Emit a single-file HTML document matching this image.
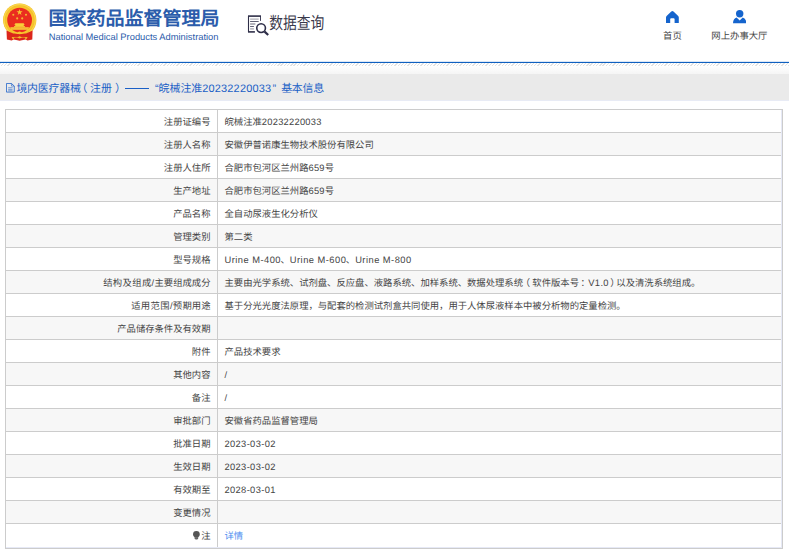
<!DOCTYPE html>
<html lang="zh-CN">
<head>
<meta charset="utf-8">
<title>国家药品监督管理局 数据查询</title>
<style>
*{box-sizing:border-box;margin:0;padding:0}
html,body{width:789px;height:555px;overflow:hidden;background:#fff}
body{font-family:"Liberation Sans",sans-serif;color:#333;position:relative;text-rendering:geometricPrecision}
.l{letter-spacing:.35px}.d{letter-spacing:.25px}.u{letter-spacing:.47px}.c{margin-left:-.5px}.s{letter-spacing:.35px}.p{position:relative}
.hdr{position:absolute;left:0;top:0;width:789px;height:61px;background:#fff}
.emblem{position:absolute;left:0;top:0}
.t1{position:absolute;left:48.6px;top:8px;font-size:19px;line-height:24px;font-weight:bold;color:#2b5cab;white-space:nowrap}
.t2{position:absolute;left:48.7px;top:31.4px;font-size:9.36px;line-height:12px;color:#2b5cab;white-space:nowrap}
.qicon{position:absolute;left:244px;top:11px}
.qtxt{position:absolute;left:269.2px;top:14.4px;font-size:13.8px;line-height:20px;color:#38384a;white-space:nowrap;transform:scaleY(1.23);transform-origin:50% 50%}
.ic{position:absolute}
.nav{position:absolute;top:29.6px;text-align:center;font-size:9.375px;line-height:12px;color:#444;white-space:nowrap}
.n1{left:652.4px;width:40px}
.n2{left:704.4px;width:70px}
.bline{position:absolute;left:0;top:61px;width:789px;height:2px;background:linear-gradient(#dbe7f6 0,#dbe7f6 1px,#0f60c0 1px,#0f60c0 2px)}
.hatch{position:absolute;left:0;top:63px;width:789px;height:3px;background:repeating-linear-gradient(135deg,#e2e2e2 0,#e2e2e2 .9px,#fff .9px,#fff 2.3px)}
.fade{position:absolute;left:0;top:66px;width:789px;height:8px;background:linear-gradient(#fff,#f5f5f5)}
.bar{position:absolute;left:0;top:74px;width:789px;height:27px;border-bottom:1px solid #e8ebf5;background:#eaeaea;color:#1a5fc6;font-size:10.9375px;line-height:13px;white-space:nowrap}
.bar svg{position:absolute;left:5.7px;top:8.9px}
.bar span{position:absolute;top:9.1px}
.bar i{font-style:normal;letter-spacing:.19px}
table{position:absolute;left:5px;top:109px;width:778px;border-collapse:collapse;table-layout:fixed;font-size:9.34px;color:#444}
td{border:1px solid #ccc;height:23px;padding:2px 6.5px 0;vertical-align:middle;line-height:12px;white-space:nowrap;overflow:hidden}
td.k{width:212px;text-align:right}
tr:nth-child(even) td{background:#f7f7f7}
tr.last td{height:25px;padding-top:0}
.lb{position:absolute;background:#e6e9f6}
a{color:#4a8df0;text-decoration:none}
.bulb{display:inline-block;vertical-align:-.6px;margin-right:1.4px}
</style>
</head>
<body>
<div class="hdr">
  <svg class="emblem" width="44" height="46" viewBox="0 0 44 46">
    <circle cx="19.7" cy="20.1" r="16.7" fill="#f5be2a"/>
    <circle cx="19.7" cy="20.1" r="15.6" fill="none" stroke="#f9d64a" stroke-width="1.3"/>
    <path d="M6.5 30.4 L6.9 39.6 L11.6 40.6 L13.8 39.4 L19.6 40.7 L25.4 39.4 L27.6 40.6 L32.3 39.6 L32.6 30.4 L26 33.5 H13.2 Z" fill="#db261b"/>
    <circle cx="19.65" cy="20.1" r="14.1" fill="#f7c52e"/>
    <circle cx="19.6" cy="20.1" r="12.4" fill="#ea2d1f"/>
    <path d="M19.6 9.1 l.75 2.2 2.3 .03 -1.85 1.4 .7 2.2 -1.9 -1.33 -1.9 1.33 .7 -2.2 -1.85 -1.4 2.3 -.03z" fill="#f5c431"/>
    <g fill="#f3b830"><circle cx="13.3" cy="14.7" r="1.05"/><circle cx="26" cy="14.7" r="1.05"/><circle cx="17.2" cy="18.4" r="1.05"/><circle cx="22.2" cy="18.4" r="1.05"/></g>
    <path d="M15.4 23.2 h8.2 l1.2 1.5 h-1 v1.3 h-8.6 v-1.3 h-1z" fill="#f8cf3a"/>
    <path d="M14.2 26 h10.6 l.4 1.3 h-11.4z" fill="#f6c234"/>
    <path d="M10.2 27.3 h18.8 l-.9 2.5 h-17z" fill="#f9d23c"/>
    <path d="M11 28.5 h17.2" stroke="#f2a02a" stroke-width=".45"/>
    <path d="M16.6 33.9 Q19.6 29 22.6 33.9 Z" fill="#f7c52e"/>
    <path d="M19.6 36.2 l2.4 1.2 -2.4 1.2 -2.4 -1.2z" fill="#f5c52e"/>
    <path d="M11.6 36.9 l2.9 .3 -1.2 2.9z M27.6 36.9 l-2.9 .3 1.2 2.9z" fill="#f3bf2c"/>
    <path d="M13.6 37.4 H25.6" stroke="#f0b62a" stroke-width=".6"/>
  </svg>
  <div class="t1">国家药品监督管理局</div>
  <div class="t2">National Medical Products Administration</div>
  <svg class="qicon" width="30" height="28" viewBox="0 0 30 28" fill="none">
    <path d="M4.5 5.1 V21" stroke="#2e2e48" stroke-width="1.1"/>
    <path d="M4 5.1 H17" stroke="#2e2e48" stroke-width="1.6"/>
    <path d="M16.5 5.1 V9.9" stroke="#2e2e48" stroke-width=".9"/>
    <path d="M4 20.9 H10.9" stroke="#2e2e48" stroke-width="1.6"/>
    <path d="M6.1 8.1h8.6" stroke="#9a9aa4" stroke-width="1"/>
    <path d="M6.1 10.5h8.6" stroke="#3a3a52" stroke-width=".8"/>
    <path d="M6.1 13h5.3" stroke="#777786" stroke-width="1.1"/>
    <path d="M6.1 15.5h3.8" stroke="#3a3a52" stroke-width=".8"/>
    <path d="M6.1 17.9h3.8" stroke="#9a9aa4" stroke-width="1.1"/>
    <circle cx="17.1" cy="17.1" r="4.35" stroke="#2e2e48" stroke-width="1.6" fill="#fff"/>
    <path d="M20.6 20.6 L24.2 24" stroke="#2e2e48" stroke-width="2.2"/>
  </svg>
  <div class="qtxt">数据查询</div>
  <svg class="ic" style="left:666px;top:10.8px" width="12.8" height="12" viewBox="0 0 12.8 12"><path d="M6.4 0 Q6.9 0 7.5 .6 L12.2 5 Q12.8 5.6 12.8 6.4 V12 H8.6 V8.2 Q8.6 7.2 7.6 7.2 H5.2 Q4.2 7.2 4.2 8.2 V12 H0 V6.4 Q0 5.6 .6 5 L5.3 .6 Q5.9 0 6.4 0Z" fill="#1564cd"/></svg>
  <div class="nav n1">首页</div>
  <svg class="ic" style="left:732.8px;top:10.4px" width="13.4" height="13.2" viewBox="0 0 13.4 13.2"><circle cx="6.7" cy="3.7" r="3.7" fill="#1564cd"/><path d="M0 13.2 Q.2 8.6 3.6 7.6 L6.7 10.4 L9.8 7.6 Q13.2 8.6 13.4 13.2Z" fill="#1564cd"/></svg>
  <div class="nav n2">网上办事大厅</div>
</div>
<div class="bline"></div>
<div class="hatch"></div>
<div class="fade"></div>
<div class="bar">
  <svg width="9.1" height="10" viewBox="0 0 10 11" fill="none" stroke="#2a6acb" stroke-width=".95"><path d="M.5 .5 H6 L9.1 3.4 V10 H.5 Z"/><path d="M6 .5 V3.4 H9.1" stroke-width=".7"/><path d="M2.4 5.2h4.8 M2.4 7h4.8 M2.4 8.6h4.8" stroke-width=".7"/></svg>
  <span id="sA" style="left:16.4px;letter-spacing:-.2px">境内医疗器械</span>
  <span id="sB" style="left:76.5px">（</span>
  <span id="sC" style="left:90px">注册</span>
  <span id="sD" style="left:115px">）</span>
  <span id="sE" style="left:125.3px;width:23.8px;height:13px;overflow:hidden;color:transparent;background:linear-gradient(#1a5fc6,#1a5fc6) no-repeat 0 4.5px/100% 1.25px">——</span>
  <span id="sF" style="left:155.1px">“</span>
  <span id="sG" style="left:158.6px">皖械注准<i>20232220033</i></span>
  <span id="sH" style="left:272.4px">”</span>
  <span id="sI" style="left:281.2px;letter-spacing:-.25px">基本信息</span>
</div>
<table>
  <tr><td class="k"><div class="w">注册证编号</div></td><td><div class="w">皖械注准<span class="d">20232220033</span></div></td></tr>
  <tr><td class="k"><div class="w">注册人名称</div></td><td><div class="w">安徽伊普诺康生物技术股份有限公司</div></td></tr>
  <tr><td class="k"><div class="w">注册人住所</div></td><td><div class="w">合肥市包河区兰州路<span class="d">659</span>号</div></td></tr>
  <tr><td class="k"><div class="w">生产地址</div></td><td><div class="w">合肥市包河区兰州路<span class="d">659</span>号</div></td></tr>
  <tr><td class="k"><div class="w">产品名称</div></td><td><div class="w">全自动尿液生化分析仪</div></td></tr>
  <tr><td class="k"><div class="w">管理类别</div></td><td><div class="w">第二类</div></td></tr>
  <tr><td class="k"><div class="w">型号规格</div></td><td><div class="w"><span class="u">Urine M-400</span><span class="c">、</span><span class="u">Urine M-600</span><span class="c">、</span><span class="u">Urine M-800</span></div></td></tr>
  <tr><td class="k"><div class="w"><span class="s">结构及组成/</span>主要组成成分</div></td><td><div class="w">主要由光学系统、试剂盘、反应盘、液路系统、加样系统、数据处理系统<span class="p" style="left:-2.3px">（</span>软件版本号<span class="p" style="left:1.5px">：</span><span class="l">V1.0</span><span class="p" style="left:1.3px;margin-right:-1.9px">）</span>以及清洗系统组成。</div></td></tr>
  <tr><td class="k"><div class="w"><span class="s">适用范围/预</span>期用途</div></td><td><div class="w">基于分光光度法原理，与配套的检测试剂盒共同使用，用于人体尿液样本中被分析物的定量检测。</div></td></tr>
  <tr><td class="k"><div class="w">产品储存条件及有效期</div></td><td></td></tr>
  <tr><td class="k"><div class="w">附件</div></td><td><div class="w">产品技术要求</div></td></tr>
  <tr><td class="k"><div class="w">其他内容</div></td><td><div class="w">/</div></td></tr>
  <tr><td class="k"><div class="w">备注</div></td><td><div class="w">/</div></td></tr>
  <tr><td class="k"><div class="w">审批部门</div></td><td><div class="w">安徽省药品监督管理局</div></td></tr>
  <tr><td class="k"><div class="w">批准日期</div></td><td><div class="w"><span class="l">2023-03-02</span></div></td></tr>
  <tr><td class="k"><div class="w">生效日期</div></td><td><div class="w"><span class="l">2023-03-02</span></div></td></tr>
  <tr><td class="k"><div class="w">有效期至</div></td><td><div class="w"><span class="l">2028-03-01</span></div></td></tr>
  <tr><td class="k"><div class="w">变更情况</div></td><td></td></tr>
  <tr class="last"><td class="k"><div class="w"><svg class="bulb" width="6.8" height="8.4" viewBox="0 0 6.8 8.4"><path d="M3.4 0 A3.4 3.4 0 0 1 6.8 3.4 Q6.8 5 5.2 6.2 V7.4 Q5.2 8.4 3.4 8.4 Q1.6 8.4 1.6 7.4 V6.2 Q0 5 0 3.4 A3.4 3.4 0 0 1 3.4 0Z" fill="#555"/><path d="M1.9 6.9h3" stroke="#aaa" stroke-width=".5"/></svg>注</div></td><td><div class="w"><a>详情</a></div></td></tr>
</table>
<div class="lb" style="left:781px;top:110px;width:1px;height:438px"></div>
<div class="lb" style="left:6px;top:547px;width:776px;height:1px"></div>
</body>
</html>
